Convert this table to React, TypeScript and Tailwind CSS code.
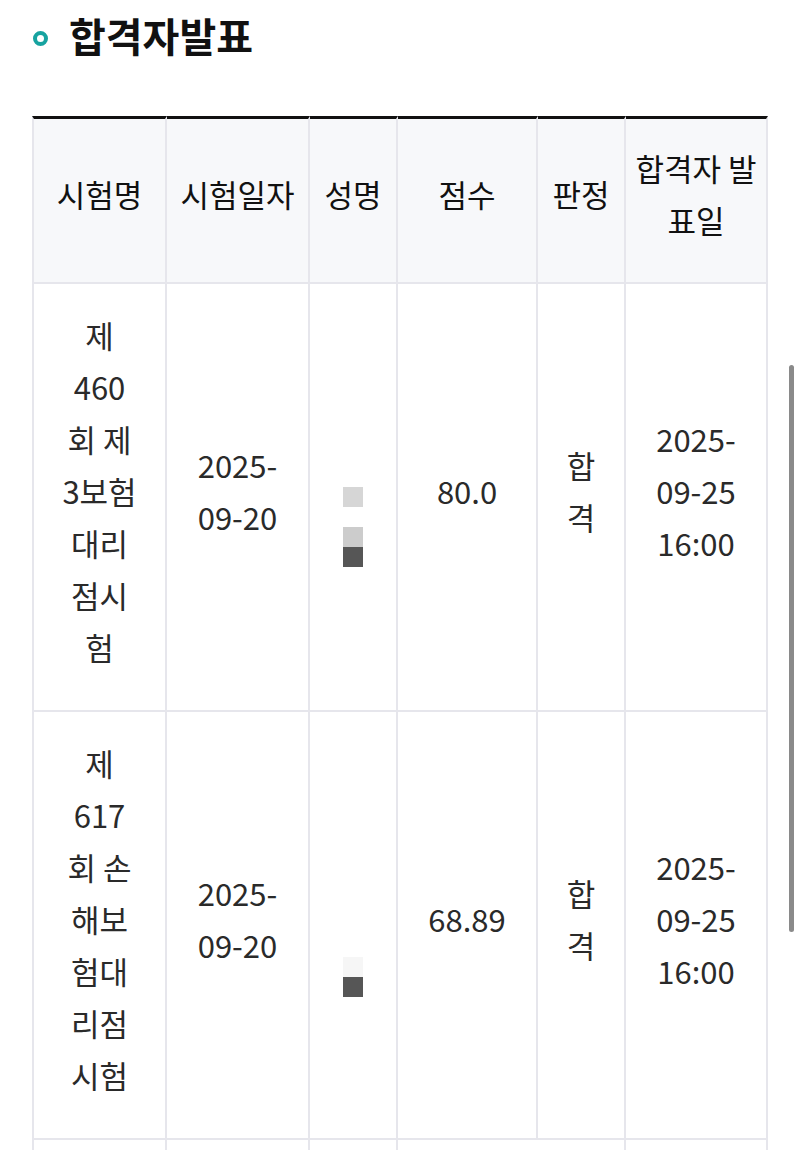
import React from "react";

const font = { fontFamily: '"Noto Sans CJK KR", "Noto Sans", sans-serif' };

interface ResultRow {
	exam: string;
	date: string;
	name: { color: string }[];
	nameOffset: string;
	score: string;
	result: string;
	announce: string;
}

const rows: ResultRow[] = [
	{
		exam: "제 460 회 제 3보험 대리점시험",
		date: "2025-09-20",
		name: [{ color: "#d6d6d6" }, { color: "transparent" }, { color: "#cccccc" }, { color: "#565656" }],
		nameOffset: "mt-[72px]",
		score: "80.0",
		result: "합격",
		announce: "2025-09-25 16:00",
	},
	{
		exam: "제 617 회 손해보험대리점시험",
		date: "2025-09-20",
		name: [{ color: "#f6f6f6" }, { color: "#565656" }],
		nameOffset: "mt-[116px]",
		score: "68.89",
		result: "합격",
		announce: "2025-09-25 16:00",
	},
];

const th =
	"border-t-[3px] border-t-[#111] border-r-2 border-r-[#e6e6ec] border-b-2 border-b-[#e6e6ec] bg-[#f7f8fa] px-1 pb-[14px] text-center align-middle font-normal text-[#111]";
const td =
	"border-r-2 border-r-[#e6e6ec] border-b-2 border-b-[#e6e6ec] pt-[25px] pb-[37px] text-center align-middle text-[#2a2a2a]";

export default function App() {
	return (
		<div className="relative h-[1150px] w-[800px] overflow-hidden bg-white" style={font}>
			{/* Title */}
			<div className="flex items-center gap-[21px] pl-[33px] pt-[10px]">
				<span className="mt-[6px] h-[15px] w-[15px] rounded-full border-[4px] border-[#17a3a0]" />
				<h2 className="text-[40px] font-bold leading-[50px] text-[#111]">합격자발표</h2>
			</div>

			{/* Table */}
			<div className="mt-[56px] px-[32px]">
				<table className="w-[736px] table-fixed border-separate border-spacing-0 text-[31px] leading-[52px]">
					<colgroup>
						<col className="w-[135px]" />
						<col className="w-[143px]" />
						<col className="w-[88px]" />
						<col className="w-[140px]" />
						<col className="w-[88px]" />
						<col className="w-[142px]" />
					</colgroup>
					<thead>
						<tr className="h-[168px]">
							<th className={th + " border-l-2 border-l-[#e6e6ec]"}>시험명</th>
							<th className={th}>시험일자</th>
							<th className={th}>성명</th>
							<th className={th}>점수</th>
							<th className={th}>판정</th>
							<th className={th}>
								<div className="mx-auto w-[128px]">합격자 발표일</div>
							</th>
						</tr>
					</thead>
					<tbody>
						{rows.map((row) => (
							<tr key={row.exam}>
								<td className={td + " border-l-2 border-l-[#e6e6ec]"}>
									<div className="mx-auto w-[80px]">{row.exam}</div>
								</td>
								<td className={td}>
									<div className="mx-auto w-[110px]">{row.date}</div>
								</td>
								<td className={td}>
									<div className={"mx-auto flex w-[20px] flex-col " + row.nameOffset}>
										{row.name.map((b, i) => (
											<span key={i} className="block h-[20px] w-[20px]" style={{ background: b.color }} />
										))}
									</div>
								</td>
								<td className={td}>{row.score}</td>
								<td className={td}>
									<div className="mx-auto w-[40px]">{row.result}</div>
								</td>
								<td className={td}>
									<div className="mx-auto w-[110px]">{row.announce}</div>
								</td>
							</tr>
						))}
						<tr className="h-[200px]">
							<td className={td + " border-l-2 border-l-[#e6e6ec]"} />
							<td className={td} />
							<td className={td} />
							<td className={td} colSpan={2} />
							<td className={td} />
						</tr>
					</tbody>
				</table>
			</div>

			{/* Overlay scrollbar */}
			<div className="absolute left-[789px] top-[365px] h-[567px] w-[5px] rounded-full bg-[#8a8a8a]" />
		</div>
	);
}
